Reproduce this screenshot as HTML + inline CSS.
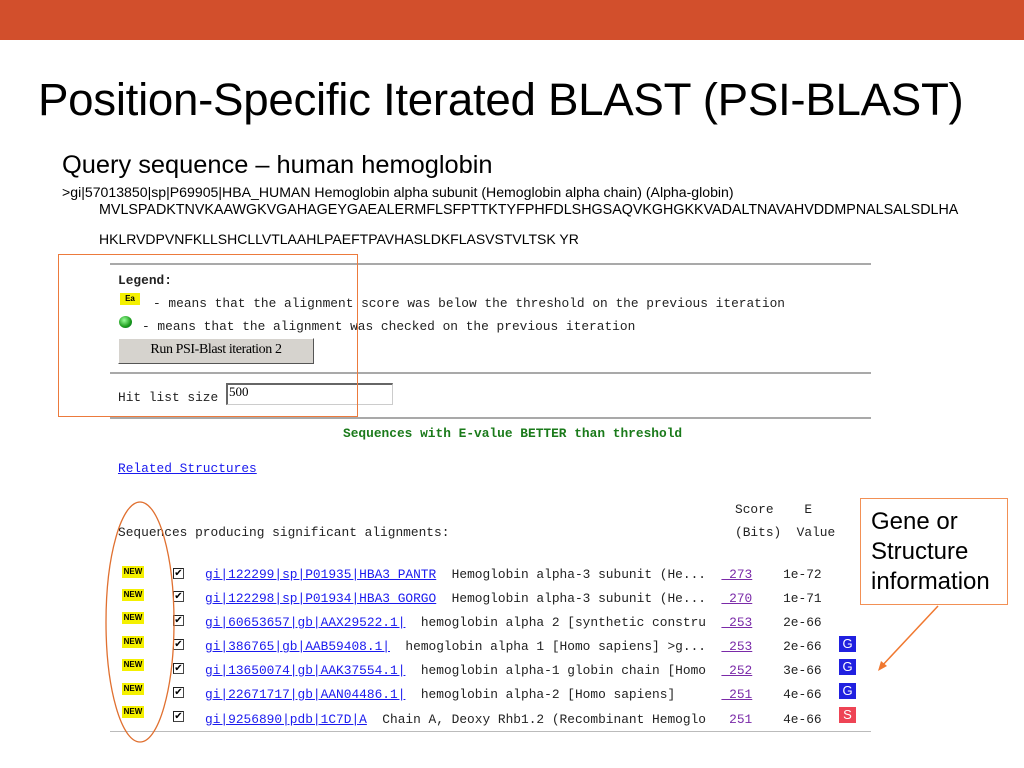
<!DOCTYPE html>
<html><head><meta charset="utf-8"><style>
*{margin:0;padding:0;box-sizing:border-box}
body{width:1024px;height:768px;background:#fff;position:relative;overflow:hidden;font-family:"Liberation Sans",sans-serif}
.a{position:absolute;white-space:nowrap}
.m{font-family:"Liberation Mono",monospace;font-size:12.85px;color:#222;line-height:16px}
.hr{position:absolute;left:110px;width:761px;height:2px;background:#a9a9a9}
.lk{color:#1a1aee;text-decoration:underline}
.pl{color:#7a2aa8;text-decoration:underline}
.new{position:absolute;left:122px;width:22px;height:12px;background:#f4f000;font:bold 8px "Liberation Sans",sans-serif;color:#000;text-align:center;line-height:12px}
.cb{position:absolute;left:173px;width:11px;height:11px;border:1px solid #444;border-top-color:#222;border-left-color:#222;font-size:10px;line-height:9px;text-align:center;color:#000}
.gs{position:absolute;left:839px;width:17px;height:16px;color:#fff;font:13px "Liberation Sans",sans-serif;text-align:center;line-height:16px}
</style></head><body>
<div class="a" style="left:0;top:0;width:1024px;height:40px;background:#d24f2c"></div>
<div class="a" style="left:38px;top:74px;font-size:45.7px;color:#000;letter-spacing:-0.3px">Position-Specific Iterated BLAST (PSI-BLAST)</div>
<div class="a" style="left:62px;top:151px;font-size:25.4px;color:#000">Query sequence – human hemoglobin</div>
<div class="a" style="left:62px;top:184px;font-size:14.1px;color:#000">&gt;gi|57013850|sp|P69905|HBA_HUMAN Hemoglobin alpha subunit (Hemoglobin alpha chain) (Alpha-globin)</div>
<div class="a" style="left:99px;top:202px;font-size:14.3px;color:#000">MVLSPADKTNVKAAWGKVGAHAGEYGAEALERMFLSFPTTKTYFPHFDLSHGSAQVKGHGKKVADALTNAVAHVDDMPNALSALSDLHA</div>
<div class="a" style="left:99px;top:231px;font-size:14px;color:#000">HKLRVDPVNFKLLSHCLLVTLAAHLPAEFTPAVHASLDKFLASVSTVLTSK YR</div>

<div class="hr" style="top:263px"></div>
<div class="a m" style="left:118px;top:273px;font-weight:bold">Legend:</div>
<div class="a" style="left:120px;top:293px;width:20px;height:12px;background:#f4f000;font:bold 8px sans-serif;text-align:center;line-height:12px">Ea</div>
<div class="a m" style="left:153px;top:296px">- means that the alignment score was below the threshold on the previous iteration</div>
<div class="a" style="left:119px;top:316px;width:13px;height:12px;border-radius:50%;background:radial-gradient(circle at 40% 35%,#9f9,#1a9a1a 60%,#063)"></div>
<div class="a m" style="left:142px;top:319px">- means that the alignment was checked on the previous iteration</div>
<div class="a" style="left:118px;top:338px;width:196px;height:26px;background:#d6d3ce;border:1px solid #fff;border-right-color:#555;border-bottom-color:#555;font:14px 'Liberation Serif',serif;text-align:center;line-height:22px;letter-spacing:-0.4px">Run PSI-Blast iteration 2</div>
<div class="hr" style="top:372px"></div>
<div class="a m" style="left:118px;top:390px">Hit list size</div>
<div class="a" style="left:226px;top:383px;width:167px;height:22px;border:1px solid #ccc;border-top:2px solid #666;border-left:2px solid #666;font:13px 'Liberation Serif',serif;line-height:14px;padding-left:1px">500</div>
<div class="hr" style="top:417px"></div>
<div class="a" style="left:58px;top:254px;width:300px;height:163px;border:1px solid #ec7a3c"></div>
<div class="a m" style="left:343px;top:426px;font-weight:bold;color:#1a7a1a">Sequences with E-value BETTER than threshold</div>
<div class="a m lk" style="left:118px;top:461px">Related Structures</div>
<div class="a m" style="left:735px;top:502px">Score&nbsp;&nbsp;&nbsp;&nbsp;E</div>
<div class="a m" style="left:735px;top:525px">(Bits)&nbsp;&nbsp;Value</div>
<div class="a m" style="left:118px;top:525px">Sequences producing significant alignments:</div>

<div class="new" style="top:566px">NEW</div><div class="cb" style="top:568px">✔</div>
<div class="a m" style="left:205px;top:567px"><span class="lk">gi|122299|sp|P01935|HBA3_PANTR</span>&nbsp;&nbsp;Hemoglobin alpha-3 subunit (He...&nbsp;&nbsp;<span class="pl">&nbsp;273</span>&nbsp;&nbsp;&nbsp;&nbsp;1e-72</div>
<div class="new" style="top:589px">NEW</div><div class="cb" style="top:591px">✔</div>
<div class="a m" style="left:205px;top:591px"><span class="lk">gi|122298|sp|P01934|HBA3_GORGO</span>&nbsp;&nbsp;Hemoglobin alpha-3 subunit (He...&nbsp;&nbsp;<span class="pl">&nbsp;270</span>&nbsp;&nbsp;&nbsp;&nbsp;1e-71</div>
<div class="new" style="top:612px">NEW</div><div class="cb" style="top:615px">✔</div>
<div class="a m" style="left:205px;top:615px"><span class="lk">gi|60653657|gb|AAX29522.1|</span>&nbsp;&nbsp;hemoglobin alpha 2 [synthetic constru&nbsp;&nbsp;<span class="pl">&nbsp;253</span>&nbsp;&nbsp;&nbsp;&nbsp;2e-66</div>
<div class="new" style="top:636px">NEW</div><div class="cb" style="top:639px">✔</div>
<div class="a m" style="left:205px;top:639px"><span class="lk">gi|386765|gb|AAB59408.1|</span>&nbsp;&nbsp;hemoglobin alpha 1 [Homo sapiens] &gt;g...&nbsp;&nbsp;<span class="pl">&nbsp;253</span>&nbsp;&nbsp;&nbsp;&nbsp;2e-66</div>
<div class="new" style="top:659px">NEW</div><div class="cb" style="top:663px">✔</div>
<div class="a m" style="left:205px;top:663px"><span class="lk">gi|13650074|gb|AAK37554.1|</span>&nbsp;&nbsp;hemoglobin alpha-1 globin chain [Homo&nbsp;&nbsp;<span class="pl">&nbsp;252</span>&nbsp;&nbsp;&nbsp;&nbsp;3e-66</div>
<div class="new" style="top:683px">NEW</div><div class="cb" style="top:687px">✔</div>
<div class="a m" style="left:205px;top:687px"><span class="lk">gi|22671717|gb|AAN04486.1|</span>&nbsp;&nbsp;hemoglobin alpha-2 [Homo sapiens]&nbsp;&nbsp;&nbsp;&nbsp;&nbsp;&nbsp;<span class="pl">&nbsp;251</span>&nbsp;&nbsp;&nbsp;&nbsp;4e-66</div>
<div class="new" style="top:706px">NEW</div><div class="cb" style="top:711px">✔</div>
<div class="a m" style="left:205px;top:712px"><span class="lk">gi|9256890|pdb|1C7D|A</span>&nbsp;&nbsp;Chain A, Deoxy Rhb1.2 (Recombinant Hemoglo&nbsp;&nbsp;&nbsp;<span style="color:#7a2aa8">251</span>&nbsp;&nbsp;&nbsp;&nbsp;4e-66</div>
<div class="gs" style="top:636px;background:#2020e0">G</div>
<div class="gs" style="top:659px;background:#2020e0">G</div>
<div class="gs" style="top:683px;background:#2020e0">G</div>
<div class="gs" style="top:707px;background:#ee4455">S</div>
<div class="a" style="left:110px;top:731px;width:761px;height:1px;background:#bbb"></div>

<svg class="a" style="left:0;top:0" width="1024" height="768">
<ellipse cx="140" cy="622" rx="34" ry="120" fill="none" stroke="#e07030" stroke-width="1.3"/>
<line x1="938" y1="606" x2="880" y2="668" stroke="#f07830" stroke-width="1.5"/>
<polygon points="878,671 881,661 887,666" fill="#f07830"/>
</svg>
<div class="a" style="left:860px;top:498px;width:148px;height:107px;border:1px solid #f29055;background:#fff;padding:8px 0 0 10px;font-size:24px;line-height:30px;white-space:normal;color:#000">Gene or<br>Structure<br>information</div>
</body></html>
